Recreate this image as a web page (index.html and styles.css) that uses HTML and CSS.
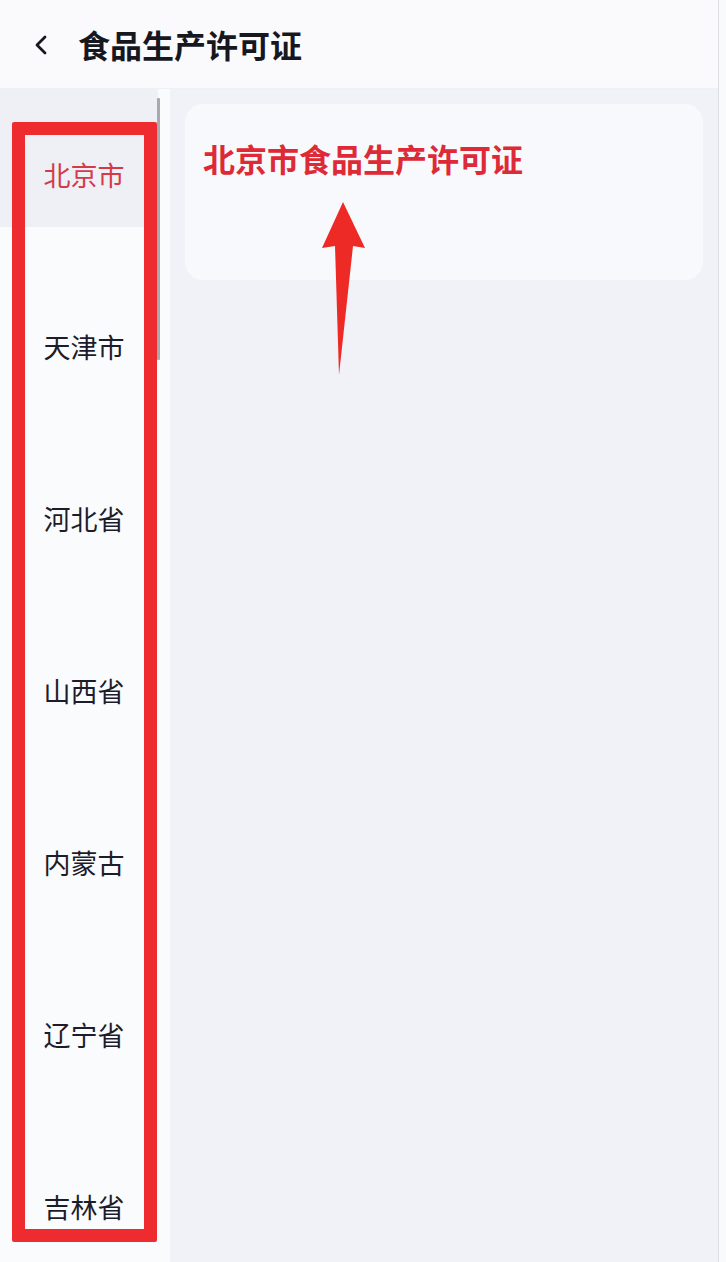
FILE: index.html
```html
<!DOCTYPE html>
<html lang="zh-CN">
<head>
<meta charset="utf-8">
<title>食品生产许可证</title>
<link rel="stylesheet" href="styles.css">
</head>
<body>
<div class="page">
  <header class="header">
    <svg class="back" width="14" height="22" viewBox="0 0 14 22"><path d="M11 3 L3 11 L11 19" fill="none" stroke="#17171f" stroke-width="2.8" stroke-linecap="round" stroke-linejoin="round"/></svg>
    <h1 class="title">食品生产许可证</h1>
  </header>
  <div class="main">
    <nav class="sidebar">
      <ul class="list">
        <li class="item active">北京市</li>
        <li class="item">天津市</li>
        <li class="item">河北省</li>
        <li class="item">山西省</li>
        <li class="item">内蒙古</li>
        <li class="item">辽宁省</li>
        <li class="item">吉林省</li>
      </ul>
    </nav>
    <section class="content">
      <div class="card">
        <h2 class="card-title">北京市食品生产许可证</h2>
      </div>
    </section>
  </div>
  <div class="scrollbar"></div>
  <div class="highlight-box"></div>
  <svg class="arrow" width="726" height="1262" viewBox="0 0 726 1262"><polygon points="343,202 365,248 353,246 339,375 335,246 322,248" fill="#ee2a26"/></svg>
</div>
</body>
</html>
```

FILE: styles.css
```css
* { box-sizing: border-box; }
html, body { margin: 0; padding: 0; }
body {
  width: 726px;
  height: 1262px;
  overflow: hidden;
  background: #f9fafc;
  font-family: "Noto Sans CJK SC", "Noto Sans", sans-serif;
}
.page {
  position: relative;
  width: 719px;
  height: 1262px;
  display: flex;
  flex-direction: column;
  border-right: 1px solid #dcdee4;
  overflow: hidden;
}
.header {
  height: 89px;
  flex: none;
  display: flex;
  align-items: center;
  padding-left: 34px;
  gap: 30px;
  background: #fafafc;
  border-bottom: 1px solid #eef0f4;
}
.back { flex: none; margin-top: 2px; }
.title {
  margin: 0;
  font-size: 32px;
  font-weight: 700;
  color: #17171f;
  line-height: 40px;
}
.main {
  flex: 1;
  display: flex;
  min-height: 0;
}
.sidebar {
  width: 170px;
  flex: none;
  background: #fafbfd;
  overflow: hidden;
}
.list {
  list-style: none;
  margin: 0;
  padding: 0;
  width: 158px;
}
.item {
  height: 172px;
  display: flex;
  align-items: center;
  justify-content: center;
  padding-left: 10px;
  font-size: 27px;
  color: #1c1c2a;
  line-height: 34px;
}
.item.active {
  color: #d43a4a;
  background: linear-gradient(to bottom, #eef0f5 0, #eef0f5 138px, transparent 138px);
}
.content {
  flex: 1;
  background: #f0f2f8;
  padding: 15px 15px 0 15px;
}
.card {
  height: 176px;
  border-radius: 18px;
  background: #f8f9fc;
  padding: 34px 18px 0 18px;
}
.card-title {
  margin: 0;
  font-size: 32px;
  font-weight: 700;
  line-height: 40px;
  color: #dd2a36;
}
.scrollbar {
  position: absolute;
  left: 157px;
  top: 98px;
  width: 3px;
  height: 262px;
  background: #a8a9b2;
  border-radius: 1px;
}
.highlight-box {
  position: absolute;
  left: 12px;
  top: 122px;
  width: 145px;
  height: 1120px;
  border: 13px solid #ee2b2f;
  border-radius: 2px;
}
.arrow {
  position: absolute;
  left: 0;
  top: 0;
  pointer-events: none;
}
```
